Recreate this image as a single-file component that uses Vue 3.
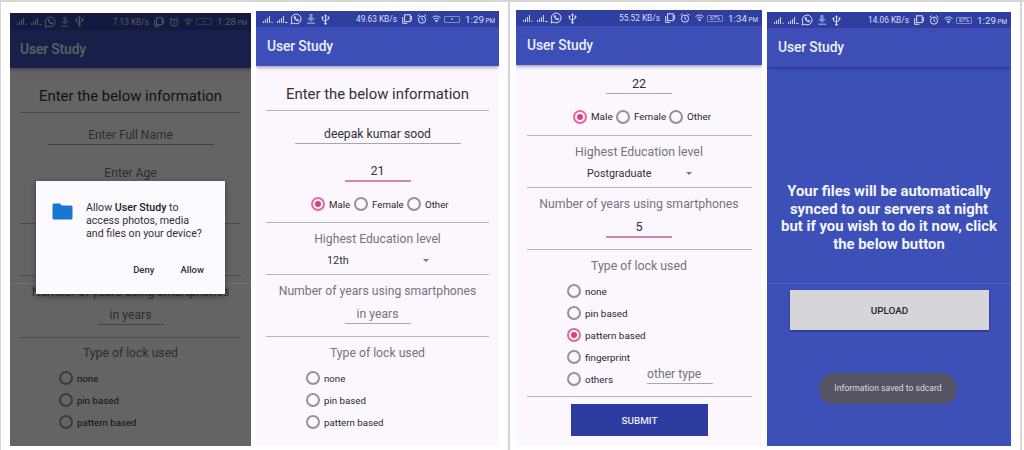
<script setup>
const lockTypes = ['none', 'pin based', 'pattern based', 'fingerprint', 'others']

const groups = [
  [
    { id: 'ask', kind: 'form', speed: '7.13 KB/s', time: '1:28', battery: '', download: true, name: '', age: '', dialog: true },
    { id: 'fill', kind: 'form', speed: '49.63 KB/s', time: '1:29', battery: '', download: true, name: 'deepak kumar sood', age: '21', dialog: false }
  ],
  [
    { id: 'more', kind: 'rest', speed: '55.52 KB/s', time: '1:34', battery: '67%', download: false },
    { id: 'sync', kind: 'sync', speed: '14.06 KB/s', time: '1:29', battery: '67%', download: true }
  ]
]
</script>

<template>
  <div class="board">
    <section v-for="(screens, g) in groups" :key="g" class="group">
      <article v-for="s in screens" :key="s.id" class="phone" :class="s.id">
        <header class="appbar">
          <div class="status">
            <svg class="sig" viewBox="0 0 11 9"><path d="M.5 8V6M2.500 8V4.500M4.500 8V3M6.500 8V1" /><path d="M9 8V6.800" /></svg>
            <svg class="sig two" viewBox="0 0 11 9"><path d="M.5 8V6M2.500 8V4.500M4.500 8V3M6.500 8V1" /><path d="M8 7.500H10.600" /></svg>
            <svg class="wa" viewBox="0 0 12 12">
              <path class="ln" d="M1 11l.8-2.800A4.900 4.900 0 1 1 3.700 10.200z" />
              <path class="ln thick" d="M4.200 3.600c-.6 2 2 4.900 4.200 4.300l.4-1-1.300-.7-.7.6C5.900 6.400 5.500 5.900 5.200 5.200l.6-.6-.6-1.200z" />
            </svg>
            <svg v-if="s.download" class="dl" viewBox="0 0 8 10"><path d="M2.500 0h3v4H8L4 7.800 0 4h2.500zM0 8.600h8V10H0z" /></svg>
            <svg class="usb" viewBox="0 0 9 11">
              <path class="ln" d="M4.500 1.500V9M4.500 7.600L1.500 5.800V3.800M4.500 6.700L7.500 5.200V3.600" />
              <path class="fl" d="M4.500 0L6 2.200H3zM.6 2.600h1.800v1.800H.6zM6.600 2.600h1.800v1.800H6.600z" />
              <circle class="fl" cx="4.500" cy="9.600" r="1.200" />
            </svg>
            <span class="speed">{{ s.speed }}</span>
            <svg class="rot" viewBox="0 0 10 10"><rect class="ln" x="2.600" y=".8" width="5.600" height="6.800" /><path class="ln" d="M.7 3v6.300h4.600M9.400 2v4.500" /></svg>
            <svg class="alarm" viewBox="0 0 10 10"><circle class="ln" cx="5" cy="5.600" r="3.600" /><path class="ln" d="M5 3.600v2.200l1.400.9M.6 2.200L2.600.6M9.400 2.200L7.400.6" /></svg>
            <svg class="wifi" viewBox="0 0 10 9"><path class="ln" d="M.5 2.800C3 .6 7 .6 9.500 2.800M2 4.800c1.800-1.500 4.200-1.500 6 0" /><path class="fl" d="M3.200 6.200c1-.9 2.600-.9 3.600 0L5 8.400z" /></svg>
            <span class="batt"><i v-if="!s.battery" class="charge" />{{ s.battery }}</span>
            <span class="clock">{{ s.time }}<small>PM</small></span>
          </div>
          <h1>User Study</h1>
        </header>

        <div v-if="s.kind === 'form'" class="body">
          <h2>Enter the below information</h2>
          <hr />
          <div class="row name"><span class="input wide" :class="{ hint: !s.name }">{{ s.name || 'Enter Full Name' }}</span></div>
          <div class="row age"><span class="input" :class="s.age ? 'focus' : 'hint'">{{ s.age || 'Enter Age' }}</span></div>
          <div class="row gender">
            <template v-if="!s.dialog"><i class="radio on" /><b>Male</b><i class="radio" /><b>Female</b><i class="radio" /><b>Other</b></template>
          </div>
          <hr />
          <h3><template v-if="!s.dialog">Highest Education level</template></h3>
          <div class="spinner"><template v-if="!s.dialog"><span>12th</span><i class="caret" /></template></div>
          <hr />
          <h3 class="years">Number of years using smartphones</h3>
          <div class="row"><span class="input short hint">in years</span></div>
          <hr class="after-input" />
          <h3 class="lock">Type of lock used</h3>
          <ul>
            <li v-for="t in lockTypes.slice(0, 3)" :key="t"><i class="radio" /><b>{{ t }}</b></li>
          </ul>
        </div>

        <div v-else-if="s.kind === 'rest'" class="body">
          <div class="row"><span class="input">22</span></div>
          <div class="row gender">
            <i class="radio on" /><b>Male</b><i class="radio" /><b>Female</b><i class="radio" /><b>Other</b>
          </div>
          <hr />
          <h3>Highest Education level</h3>
          <div class="spinner"><span>Postgraduate</span><i class="caret" /></div>
          <hr />
          <h3>Number of years using smartphones</h3>
          <div class="row"><span class="input focus">5</span></div>
          <hr class="after-input" />
          <h3>Type of lock used</h3>
          <ul>
            <li v-for="t in lockTypes" :key="t">
              <i class="radio" :class="{ on: t === 'pattern based' }" /><b>{{ t }}</b>
              <span v-if="t === 'others'" class="input hint other">other type</span>
            </li>
          </ul>
          <hr class="last" />
          <button class="submit">SUBMIT</button>
        </div>

        <div v-else class="body syncbody">
          <p>Your files will be automatically<br />synced to our servers at night<br />but if you wish to do it now, click<br />the below button</p>
          <i class="seam" />
          <button class="upload">UPLOAD</button>
          <span class="toast">Information saved to sdcard</span>
        </div>

        <div v-if="s.dialog" class="scrim">
          <i class="seam" />
          <div class="dialog">
            <div class="ask-text">
              <svg class="folder" viewBox="0 0 21 17"><path d="M2 .5h6l2 2h9a1.500 1.500 0 0 1 1.500 1.500v11a1.500 1.500 0 0 1-1.500 1.500H2A1.500 1.500 0 0 1 .5 15V2A1.500 1.500 0 0 1 2 .5z" /></svg>
              <p>Allow <strong>User Study</strong> to<br />access photos, media<br />and files on your device?</p>
            </div>
            <div class="actions"><span>Deny</span><span>Allow</span></div>
          </div>
        </div>
      </article>
    </section>
  </div>
</template>

<style>
body { background: #fff; overflow: hidden; }
</style>

<style scoped>
* { box-sizing: border-box; }
.board {
  display: flex; width: 1024px; height: 450px; overflow: hidden;
  border-top: 2px solid #d8d7d5; border-left: 1px solid #d6d6d6;
  background: #fff; font-family: Roboto, "Liberation Sans", sans-serif; color: #333038;
}
.group { display: flex; align-items: flex-end; gap: 5px; padding: 0 9px 4px; height: 448px; border-right: 2px solid #d4d4d8; }
.group:last-child { width: 512px; padding: 0 9px 4px 6px; border-right-color: #d9d7d5; }
.phone { position: relative; display: flex; flex-direction: column; background: #fcf7fe; overflow: hidden; flex: none; }
.ask { width: 241px; height: 433px; }
.fill { width: 243px; height: 435px; }
.more { width: 246px; height: 436px; }
.sync { width: 244px; height: 434px; background: #3d50b7; }

.appbar { flex: none; height: 55px; background: #3d4fb6; box-shadow: 0 1px 4px rgba(30, 35, 90, .55); position: relative; }
.status { display: flex; align-items: center; height: 16px; padding: 0 4px 0 7px; background: #303f9f; color: #d9def8; font-size: 8px; }
.ask .status { height: 17px; }
.ask h1 { line-height: 38px; }
.status svg { flex: none; overflow: visible; fill: none; stroke: none; }
.ln { stroke: #d9def8; stroke-width: 1; fill: none; }
.thick { stroke-width: .6; fill: #d9def8; }
.fl { fill: #d9def8; }
.sig { width: 11px; height: 9px; margin-right: 3px; }
.status .sig path { stroke: #c6ccf0; stroke-width: 1.100; }
.status .sig.two { margin-right: 2px; }
.wa { width: 12px; height: 12px; }
.dl { width: 8px; height: 10px; margin-left: 5px; }
.dl path { fill: #8590cd; }
.usb { width: 9px; height: 11px; margin-left: 6px; }
.speed { margin-left: auto; margin-right: 5px; font-size: 8.300px; white-space: nowrap; }
.rot, .alarm { width: 10px; height: 10px; margin-right: 5px; }
.wifi { width: 9px; height: 8px; margin-right: 3px; }
.batt { display: flex; align-items: center; justify-content: center; width: 16px; height: 7px; border: 1px solid #7f8acb; border-radius: 1px; font-size: 5.500px; line-height: 5px; }
.charge { width: 2px; height: 2px; background: #62b58c; }
.clock { width: 30px; margin-left: 5px; font-size: 9.800px; white-space: nowrap; display: flex; align-items: baseline; justify-content: space-between; }
.clock small { font-size: 6.400px; }
h1 { margin: 0; padding-left: 11px; font-size: 13.800px; line-height: 39px; font-weight: 500; color: #eceefb; letter-spacing: -.1px; }
.ask h1 { padding-left: 10px; }

.body { display: flex; flex-direction: column; flex: 1; padding-top: 12px; }
h2, h3 { margin: 0; font-weight: 400; text-align: center; white-space: nowrap; flex: none; }
h2 { height: 32px; line-height: 32px; font-size: 14.900px; }
h3 { height: 31px; line-height: 32px; font-size: 12.200px; color: #77727c; }
h3.lock { height: 30px; line-height: 32px; }
hr { flex: none; margin: 0 10px; border: 0; height: 1px; background: #b8b4bb; }
.row { display: flex; align-items: flex-end; justify-content: center; flex: none; }
.name { height: 33px; }
.age { height: 38px; }
.input { width: 66px; line-height: 18px; text-align: center; font-size: 12.600px; border-bottom: 1px solid #aaa6af; white-space: nowrap; }
.wide { width: 166px; font-size: 12.200px; }
.focus { border-bottom: 2px solid #d586ab; }
.hint { color: #77727c; font-size: 12.200px; }
.short { line-height: 17px; }
.gender { height: 40px; padding: 16px 0 12px 55px; align-items: center; justify-content: flex-start; }
b { font-weight: 400; font-size: 9.700px; color: #2a272e; white-space: nowrap; }
.gender b { width: 27px; margin-left: 4px; flex: none; }
.gender b:nth-of-type(1) { width: 25px; }
.gender b:nth-of-type(2) { width: 35px; }
.radio { flex: none; width: 14px; height: 14px; border: 2px solid #96919a; border-radius: 50%; display: flex; }
.radio.on { border-color: #e36a9d; }
.radio.on::after { content: ""; width: 6px; height: 6px; margin: 2px; border-radius: 50%; background: #dc3f80; flex: none; }
.spinner { height: 20px; padding: 0 70px 7px 71px; display: flex; align-items: center; justify-content: space-between; font-size: 10.800px; line-height: 13px; flex: none; }
.caret { border: 3.500px solid transparent; border-top-color: #77727c; border-bottom: 0; }
.after-input { margin-top: 12px; }
ul { list-style: none; margin: 0; padding: 0 0 0 50px; }
li { display: flex; align-items: center; height: 22px; }
li b { margin-left: 4px; }

.ask .name { height: 32px; }
.ask .age { height: 38px; }
.ask .gender { height: 40px; }
.ask .years { height: 31px; }
.ask .lock { height: 29px; line-height: 31px; }
.ask ul { padding-left: 49px; }
.ask .wide { font-size: 12px; }

.more .body { padding-top: 10px; }
.more .gender { height: 41px; padding-left: 57px; }
.more h3 { height: 30px; line-height: 32px; font-size: 12.300px; }
.more .spinner { height: 21px; }
.more .after-input { margin-top: 11px; }
.more hr { margin-left: 11px; margin-right: 10px; }
.more .last { margin-top: 6px; }
.more ul { padding-left: 51px; }
.more b { font-size: 9.900px; }
.other { margin-left: auto; margin-right: 49px; margin-top: -9px; text-align: left; }
button { border: 0; border-radius: 0; padding: 0; font-family: inherit; font-size: 9.900px; font-weight: 500; }
.submit { width: 137px; height: 32px; margin: 7px auto 0 55px; background: #2f3c9f; color: #e6e8f8; flex: none; }

.sync .appbar { box-shadow: 0 1px 3px rgba(20, 25, 90, .55); }
.syncbody { align-items: center; padding-top: 116px; }
.syncbody p { margin: 0; color: #f3f4fd; font-weight: 700; font-size: 14.850px; line-height: 17.500px; text-align: center; white-space: nowrap; }
.seam { display: block; width: 100%; height: 1px; background: rgba(255, 255, 255, .1); flex: none; }
.syncbody .seam { margin-top: 30px; }
.upload { width: 199px; height: 40px; margin: 6px 0 0 1px; background: #d6d5d9; color: #26262b; box-shadow: 0 1px 2px rgba(0, 0, 0, .4); flex: none; }
.toast { margin-top: 43px; margin-right: 2px; width: 138px; height: 31px; line-height: 31px; border-radius: 16px; background: #565463; color: #dcdae2; font-size: 8.600px; text-align: center; white-space: nowrap; flex: none; }

.scrim { position: absolute; inset: 0; background: rgba(0, 0, 0, .6); padding-top: 270px; }
.dialog { position: absolute; left: 26px; top: 168px; width: 189px; height: 113px; background: #fdfaff; padding: 20px 22px 0 16px; box-shadow: 0 2px 6px rgba(0, 0, 0, .4); }
.ask-text { display: flex; align-items: flex-start; gap: 13px; }
.folder { flex: none; width: 21px; height: 17px; margin-top: 2px; fill: #1976d2; }
.dialog p { margin: 0; font-size: 10.650px; line-height: 13px; white-space: nowrap; }
.dialog strong { font-weight: 500; color: #1c1a20; }
.actions { display: flex; justify-content: flex-end; gap: 26px; margin-top: 23px; font-size: 9.500px; line-height: 14px; font-weight: 500; }
.actions span:last-child { margin-right: -1px; }
</style>
